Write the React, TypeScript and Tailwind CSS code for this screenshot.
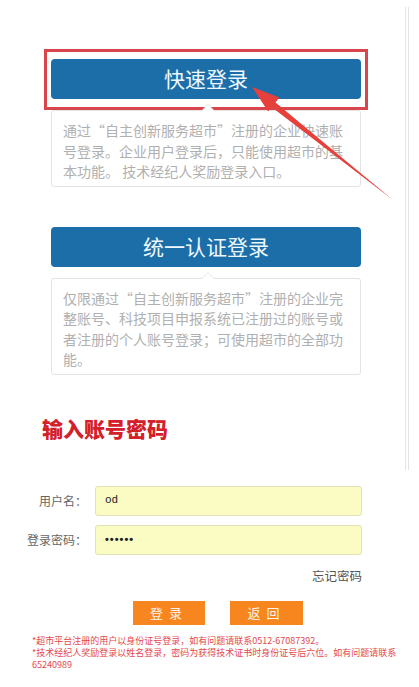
import React from "react";

const cjk = { fontFamily: '"Noto Sans CJK SC", "Noto Sans", sans-serif' };

function Caret() {
  return (
    <div className="absolute -top-[7px] left-[149px] h-0 w-0 border-x-[7px] border-b-[7px] border-x-transparent border-b-[#e3e3e3]">
      <div className="absolute left-[-6px] top-[1px] h-0 w-0 border-x-[6px] border-b-[6px] border-x-transparent border-b-white" />
    </div>
  );
}

function InfoBox({ lines }: { lines: string[] }) {
  return (
    <div className="relative mt-[11px] rounded-[3px] border border-[#e3e3e3] bg-white px-[11px] pt-[9px] pb-[4px] text-[14px] leading-[20.5px] text-[#b0b0b0]">
      <Caret />
      {lines.map((l) => (
        <div key={l} className="whitespace-nowrap">
          {l}
        </div>
      ))}
    </div>
  );
}

function Arrow() {
  // tip at (252,87), tail at (393,200)
  return (
    <svg className="pointer-events-none absolute left-0 top-0" width="419" height="687">
      <polygon
        points="252,87 279.4,97.5 275.5,102.5 393,200 271.5,107 268.2,111.5"
        fill="#e5403b"
      />
    </svg>
  );
}

function Field({ label, children }: { label: string; children: React.ReactNode }) {
  return (
    <div className="flex items-center">
      <div className="w-[88px] pr-[1px] text-right text-[12px] text-[#666]">{label}</div>
      <div className="ml-[7px] flex h-[30px] w-[267px] items-center rounded-[3px] border border-[#e2e2b4] bg-[#fafcc3] px-[9px] text-[#222]">
        {children}
      </div>
    </div>
  );
}

export default function App() {
  return (
    <div className="relative h-[687px] w-[419px] overflow-hidden bg-white" style={cjk}>
      {/* scrollbar track */}
      <div className="absolute left-[405px] top-[7px] h-[463px] w-[4px] border-x border-[#e4e4e4]" />

      <div className="ml-[51px] w-[310px] pt-[59px]">
        <div className="relative flex h-[40px] items-center justify-center rounded-[4px] bg-[#1c6ea8] text-[21px] text-[#eef9ff]">
          快速登录
          <div className="absolute -bottom-[11px] -left-[7px] -right-[7px] -top-[10px] border-[3px] border-[#d8464b]" />
        </div>
        <InfoBox
          lines={[
            "通过“自主创新服务超市”注册的企业快速账",
            "号登录。企业用户登录后，只能使用超市的基",
            "本功能。 技术经纪人奖励登录入口。",
          ]}
        />

        <div className="mt-[40px] flex h-[40px] items-center justify-center rounded-[4px] bg-[#1c6ea8] text-[21px] text-[#eef9ff]">
          统一认证登录
        </div>
        <InfoBox
          lines={[
            "仅限通过“自主创新服务超市”注册的企业完",
            "整账号、科技项目申报系统已注册过的账号或",
            "者注册的个人账号登录；可使用超市的全部功",
            "能。",
          ]}
        />
      </div>

      <div className="ml-[42px] mt-[40px] text-[21px] font-black leading-[26px] text-[#d3202a]">输入账号密码</div>

      <div className="mt-[45px] flex flex-col gap-[9px]">
        <Field label="用户名：">
          <span className="text-[11px]" style={{ fontFamily: '"Liberation Mono", monospace' }}>
            od
          </span>
        </Field>
        <Field label="登录密码：">
          <span className="text-[11px] font-bold tracking-[1px]" style={{ fontFamily: '"Liberation Sans", sans-serif' }}>
            ••••••
          </span>
        </Field>
      </div>

      <div className="mt-[13px] w-[362px] text-right text-[12.5px] leading-[16px] text-[#555]">忘记密码</div>

      <div className="ml-[133px] mt-[17px] flex gap-[25px]">
        <button className="h-[24px] w-[72px] bg-[#f7861e] text-[13px] tracking-[6px] text-[#fff5ea]">登录</button>
        <button className="h-[24px] w-[73px] bg-[#f7861e] text-[13px] tracking-[6px] text-[#fff5ea]">返回</button>
      </div>

      <div className="ml-[32px] mt-[10px] w-[372px] text-[9px] leading-[12px] text-[#e4474d]">
        <div>*超市平台注册的用户以身份证号登录，如有问题请联系0512-67087392。</div>
        <div>*技术经纪人奖励登录以姓名登录，密码为获得技术证书时身份证号后六位。如有问题请联系65240989</div>
      </div>

      <Arrow />
    </div>
  );
}
